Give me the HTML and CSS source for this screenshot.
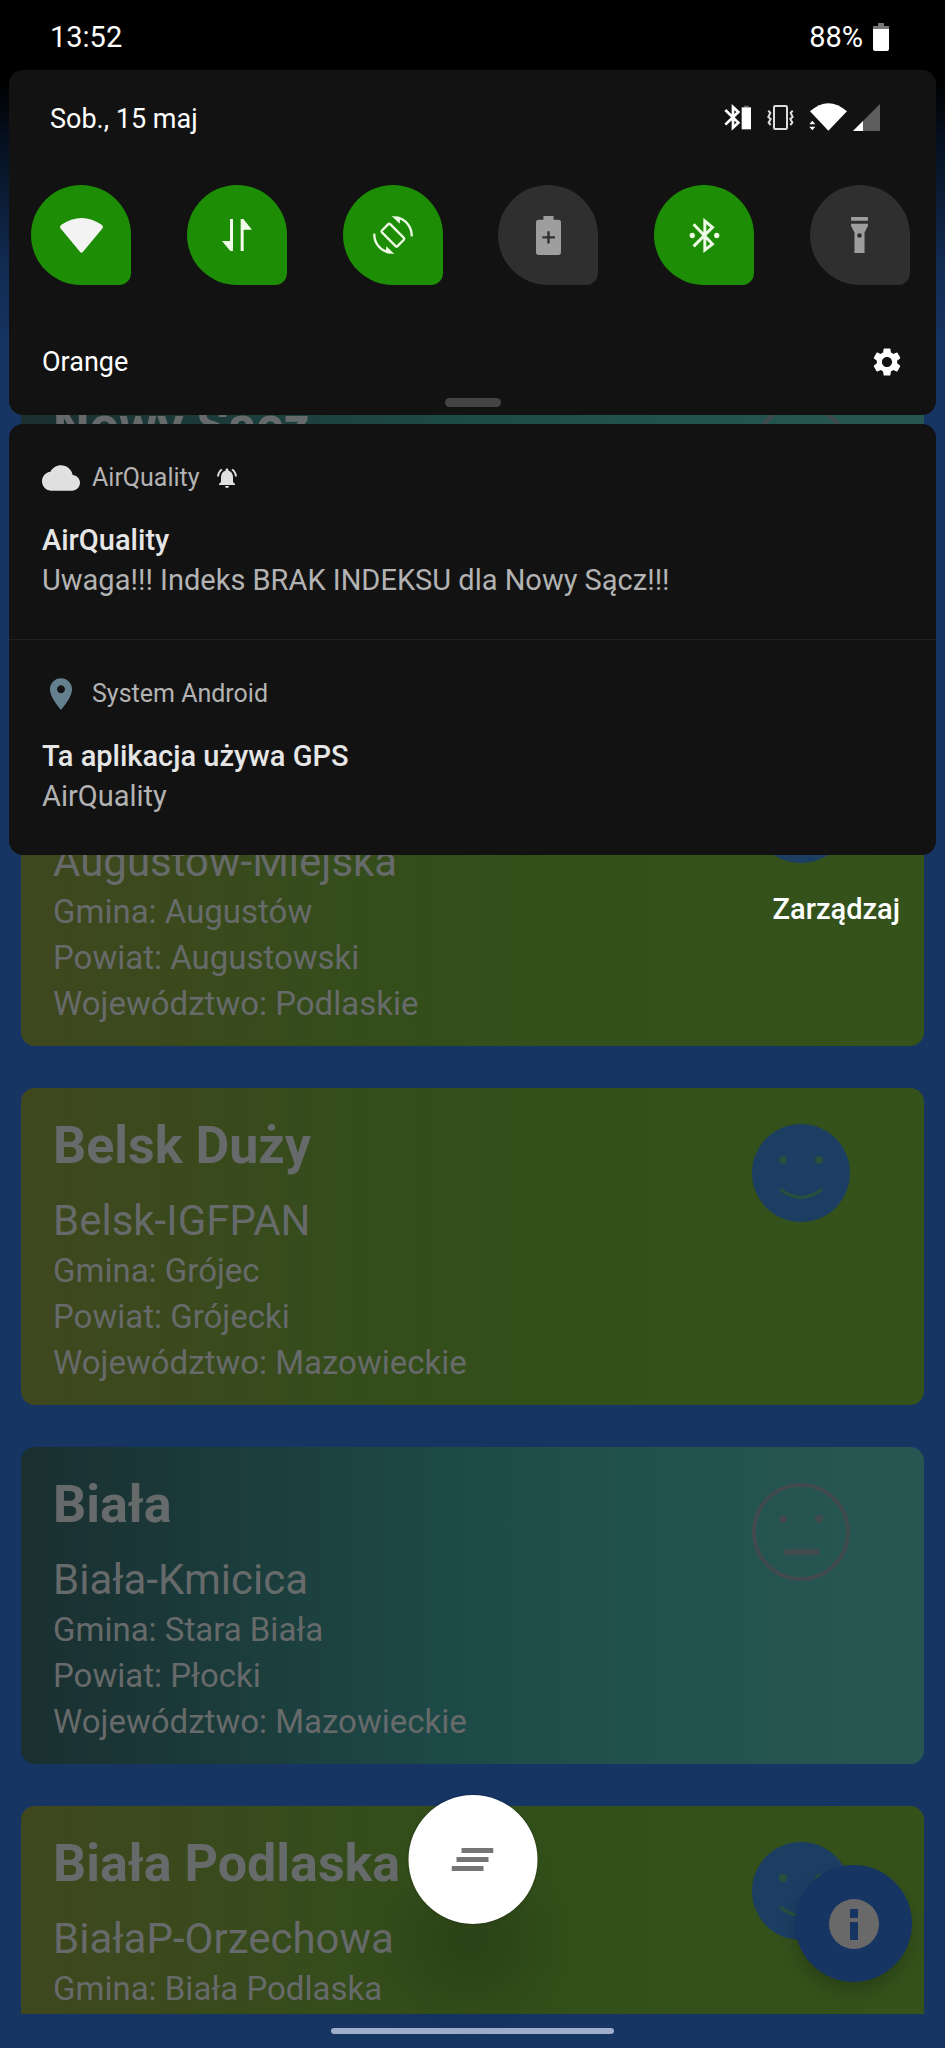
FILE: index.html
```html
<!DOCTYPE html>
<html lang="pl">
<head>
<meta charset="utf-8">
<meta name="viewport" content="width=device-width, initial-scale=1">
<title>AirQuality</title>
<link rel="stylesheet" href="styles.css">
</head>
<body>
<svg class="sprite" aria-hidden="true">
  <symbol id="happy" viewBox="-49 -49 98 98">
    <circle r="49" fill="#1c3e63"/>
    <g fill="#2a4f3c"><circle cx="-18" cy="-13" r="4"/><circle cx="18" cy="-13" r="4"/></g>
    <path d="M-21 16Q0 33 21 16" fill="none" stroke="#2a4f3c" stroke-width="3"/>
  </symbol>
  <symbol id="neutral" viewBox="-49 -49 98 98">
    <circle r="47" fill="none" stroke="#414b4d" stroke-width="4"/>
    <g fill="#414b4d"><circle cx="-18" cy="-13" r="4"/><circle cx="18" cy="-13" r="4"/></g>
    <path d="M-17 20H18" stroke="#414b4d" stroke-width="6"/>
  </symbol>
</svg>
<div class="screen">
  <div class="app">
    <main class="stations">
      <article class="card teal current">
        <div><h2>Nowy Sącz</h2></div>
        <svg class="face"><use href="#neutral"/></svg>
      </article>
      <article class="card green">
        <div class="details">
          <h3>Augustów-Miejska</h3>
          <p>Gmina: Augustów</p><p>Powiat: Augustowski</p><p>Województwo: Podlaskie</p>
        </div>
        <svg class="face"><use href="#happy"/></svg>
      </article>
      <article class="card green">
        <div>
          <h2>Belsk Duży</h2>
          <h3>Belsk-IGFPAN</h3>
          <p>Gmina: Grójec</p><p>Powiat: Grójecki</p><p>Województwo: Mazowieckie</p>
        </div>
        <svg class="face"><use href="#happy"/></svg>
      </article>
      <article class="card teal">
        <div>
          <h2>Biała</h2>
          <h3>Biała-Kmicica</h3>
          <p>Gmina: Stara Biała</p><p>Powiat: Płocki</p><p>Województwo: Mazowieckie</p>
        </div>
        <svg class="face"><use href="#neutral"/></svg>
      </article>
      <article class="card green">
        <div>
          <h2>Biała Podlaska</h2>
          <h3>BiałaP-Orzechowa</h3>
          <p>Gmina: Biała Podlaska</p>
        </div>
        <svg class="face"><use href="#happy"/></svg>
      </article>
    </main>
    <div class="navbar"><span class="home"></span></div>
    <button class="info" aria-label="Informacje">
      <svg width="50" height="50" viewBox="0 0 50 50"><circle cx="25" cy="25" r="25" fill="#696969"/><path d="M21 10h8v9h-8zM21 23h8v18h-8z" fill="#163563"/></svg>
    </button>
  </div>

  <div class="shade">
    <header class="status">
      <time>13:52</time>
      <span class="power">88%
        <svg width="16" height="28" viewBox="0 0 16 28"><path d="M5 0h6v3h5v3H0V3h5z" fill="#777"/><path d="M0 6h16v20a2 2 0 0 1-2 2H2a2 2 0 0 1-2-2z" fill="#fff"/></svg>
      </span>
    </header>

    <section class="panel quick">
      <div class="date">
        <span>Sob., 15 maj</span>
        <div class="icons">
          <svg class="i-bt" width="27" height="27" viewBox="0 0 81 81"><path d="M4 18 43 56 27 71V9L43 24 4 62" fill="none" stroke="#fff" stroke-width="8"/><path d="M60 5h14v5H60z" fill="#666"/><path d="M53 10h28v66H53z" fill="#fff"/></svg>
          <svg class="i-vib" width="27" height="27" viewBox="0 0 81 81"><g fill="none" stroke="#dcdcdc" stroke-width="6"><rect x="21" y="6" width="39" height="69" rx="4"/><path d="M4 20 10 27 4 39 11 45 5 56 11 63M77 20 71 27 77 39 70 45 76 56 70 63"/></g></svg>
          <svg class="i-wifi" width="38" height="28" viewBox="0 0 114 84" fill="#fff"><path d="M3 25Q58-24 114 25L58 83z"/><path d="M1 64 10 53 19 64zM1 71H19L10 82z"/></svg>
          <svg width="27" height="27" viewBox="0 0 81 81"><path d="M0 81H81V0z" fill="#5e5e5e"/><path d="M0 81H30V51z" fill="#fff"/></svg>
        </div>
      </div>
      <div class="tiles">
        <button class="tile on" aria-label="Wi-Fi"><svg width="43" height="35" viewBox="0 0 128 104" fill="#f3f3f3"><path d="M3 21Q64-21 125 21 130 26 126 31L68 101Q64 105 60 101L2 31Q-2 26 3 21z"/></svg></button>
        <button class="tile on" aria-label="Transmisja danych"><svg width="30" height="32" viewBox="0 0 90 96" fill="#f0fbe8"><path d="M24 0H33V96H25L0 66H24zM56 96V0H64L90 32H65V96z"/></svg></button>
        <button class="tile on" aria-label="Autoobracanie"><svg width="40" height="40" viewBox="-60 -60 120 120"><g fill="none" stroke="#effbe6" stroke-width="7"><rect x="-33" y="-17" width="66" height="35" rx="4" transform="rotate(45)"/><path d="M10-53A55 55 0 0 1 56 4M-10 53A55 55 0 0 1-56-4"/></g><path d="M-4-57 22-54 20-34zM4 57-22 54-20 34z" fill="#effbe6"/></svg></button>
        <button class="tile" aria-label="Oszczędzanie baterii"><svg width="25" height="39" viewBox="0 0 74 115"><path d="M22 0H52V11H66a8 8 0 0 1 8 8V107a8 8 0 0 1-8 8H8a8 8 0 0 1-8-8V19a8 8 0 0 1 8-8H22z" fill="#9e9e9e"/><path d="M19 63H56M37 45V81" stroke="#2f2f2f" stroke-width="7"/></svg></button>
        <button class="tile on" aria-label="Bluetooth"><svg width="31" height="35" viewBox="0 0 92 106"><path d="M13 19 70 79 47 97V9L70 28 13 86" fill="none" stroke="#effbe6" stroke-width="9"/><g fill="#effbe6"><circle cx="9" cy="53" r="8"/><circle cx="83" cy="53" r="8"/></g></svg></button>
        <button class="tile" aria-label="Latarka"><svg width="17" height="36" viewBox="0 0 50 107"><path d="M0 0H50V11H0zM0 20H50V27L40 46V107H10V46L0 27z" fill="#9e9e9e"/><circle cx="25" cy="55" r="7" fill="#2f2f2f"/></svg></button>
      </div>
      <div class="carrier">
        <span>Orange</span>
        <button class="plain" aria-label="Ustawienia"><svg width="34" height="34" viewBox="0 0 24 24" fill="#fff"><path d="M19.14 12.94c.04-.3.06-.61.06-.94 0-.32-.02-.64-.07-.94l2.03-1.58c.18-.14.23-.41.12-.61l-1.92-3.32c-.12-.22-.37-.29-.59-.22l-2.39.96c-.5-.38-1.03-.7-1.62-.94l-.36-2.54c-.04-.24-.24-.41-.48-.41h-3.84c-.24 0-.43.17-.47.41l-.36 2.54c-.59.24-1.13.57-1.62.94l-2.39-.96c-.22-.08-.47 0-.59.22L2.74 8.87c-.12.21-.08.47.12.61l2.03 1.58c-.05.3-.09.63-.09.94s.02.64.07.94l-2.03 1.58c-.18.14-.23.41-.12.61l1.92 3.32c.12.22.37.29.59.22l2.39-.96c.5.38 1.03.7 1.62.94l.36 2.54c.05.24.24.41.48.41h3.84c.24 0 .44-.17.47-.41l.36-2.54c.59-.24 1.13-.56 1.62-.94l2.39.96c.22.08.47 0 .59-.22l1.92-3.32c.12-.22.07-.47-.12-.61l-2.01-1.58zM12 15.6c-1.98 0-3.6-1.62-3.6-3.6s1.62-3.6 3.6-3.6 3.6 1.62 3.6 3.6-1.62 3.6-3.6 3.6z"/></svg></button>
      </div>
      <span class="grip"></span>
    </section>

    <section class="panel">
      <article class="note">
        <div class="source">
          <svg width="38" height="38" viewBox="0 0 24 24" fill="#e0e0e0"><path d="M19.35 10.04C18.67 6.59 15.64 4 12 4 9.11 4 6.6 5.64 5.35 8.04 2.34 8.36 0 10.91 0 14c0 3.31 2.69 6 6 6h13c2.76 0 5-2.24 5-5 0-2.64-2.05-4.78-4.65-4.96z"/></svg>
          <span>AirQuality</span>
          <svg class="bell" width="24" height="24" viewBox="0 0 24 24" fill="#e0e0e0"><path d="M7.58 4.08L6.15 2.65C3.75 4.48 2.17 7.3 2.03 10.5h2c.15-2.65 1.51-4.97 3.55-6.42zm12.39 6.42h2c-.15-3.2-1.73-6.02-4.12-7.85l-1.42 1.43c2.02 1.45 3.39 3.77 3.54 6.42zM18 11c0-3.07-1.64-5.64-4.5-6.32V4c0-.83-.67-1.5-1.5-1.5s-1.5.67-1.5 1.5v.68C7.63 5.36 6 7.92 6 11v5l-2 2v1h16v-1l-2-2v-5zm-6 11c1.1 0 2-.9 2-2h-4c0 1.1.9 2 2 2z"/></svg>
        </div>
        <h4>AirQuality</h4>
        <p>Uwaga!!! Indeks BRAK INDEKSU dla Nowy Sącz!!!</p>
      </article>
      <article class="note">
        <div class="source">
          <svg width="38" height="38" viewBox="0 0 24 24" fill="#64808e"><path d="M12 2C8.13 2 5 5.13 5 9c0 5.25 7 13 7 13s7-7.75 7-13c0-3.87-3.13-7-7-7zm0 9.5c-1.38 0-2.5-1.12-2.5-2.5s1.12-2.5 2.5-2.5 2.5 1.12 2.5 2.5-1.12 2.5-2.5 2.5z"/></svg>
          <span>System Android</span>
        </div>
        <h4>Ta aplikacja używa GPS</h4>
        <p>AirQuality</p>
      </article>
    </section>
    <button class="plain manage">Zarządzaj</button>
    <button class="clear" aria-label="Usuń wszystkie powiadomienia">
      <svg width="42" height="24" viewBox="0 0 42 24" fill="#757575"><path d="M10 0h32v5H10zM5 9h32v5H5zM0 18h32v5H0z"/></svg>
    </button>
  </div>
</div>
</body>
</html>
```
FILE: styles.css
```css
* { box-sizing: border-box; }
body { margin: 0; background: #163563; font-family: Roboto, "Noto Sans", sans-serif; }
h2, h3, h4, p { margin: 0; }
button { border: 0; padding: 0; font: inherit; color: inherit; cursor: pointer; }
svg { display: block; flex: none; }
.sprite { position: absolute; width: 0; height: 0; }

.screen { display: grid; height: 100vh; overflow: hidden; }
.app, .shade { grid-area: 1 / 1; min-width: 0; min-height: 0; position: relative; display: flex; flex-direction: column; }

.app { background: linear-gradient(#000 80px, #06101f 140px, #112b52 270px, #163563 350px); }
.stations { flex: 1; min-height: 0; overflow: hidden; padding: 368px 21px 0; }
.card {
  display: flex; justify-content: space-between; align-items: flex-start;
  min-height: 317px; margin-bottom: 42px; padding: 28px 32px 19px;
  border-radius: 14px; color: #676a6a;
}
.card.current { margin-bottom: 44px; }
.details { align-self: flex-end; }
.green { background: linear-gradient(90deg, #3f471e, #344d1b 40%, #32501a 60%, #35521b); }
.teal { background: linear-gradient(90deg, #1a2f30, #1d4b48 50%, #22524e 70%, #285753); }
.card h2 { font-size: 52px; line-height: 60px; font-weight: 700; margin-bottom: 18px; }
.card h3 { font-size: 42px; line-height: 54px; font-weight: 400; }
.card p { font-size: 33px; line-height: 46px; }
.face { width: 98px; height: 98px; margin: 8px 42px 0 0; }

.navbar { height: 34px; display: flex; justify-content: center; align-items: center; }
.home { width: 30%; height: 6px; border-radius: 3px; background: #9fafcb; }
.info {
  position: absolute; right: 33px; bottom: 66px; width: 117px; height: 117px;
  display: flex; align-items: center; justify-content: center;
  border-radius: 50%; background: #163563; box-shadow: 0 10px 18px rgba(0, 0, 0, .2);
}

.shade { padding: 0 9px; color: #fff; }
.status { height: 70px; display: flex; justify-content: space-between; align-items: center; padding: 3px 47px 0 41px; font-size: 29px; }
.power { display: flex; align-items: center; gap: 10px; }
.panel { background: #121212; border-radius: 14px; }
.quick { margin-bottom: 9px; padding-bottom: 8px; font-size: 27px; }
.date { height: 115px; display: flex; justify-content: space-between; align-items: flex-start; padding: 33px 56px 0 41px; }
.icons { display: flex; align-items: center; gap: 6px; }
.i-bt { margin-right: 10px; }
.i-vib { margin-right: 9px; }
.tiles { display: flex; justify-content: space-between; padding: 0 26px 0 22px; }
.tile {
  width: 100px; height: 100px; display: flex; align-items: center; justify-content: center;
  border-radius: 50px 50px 12px 50px; background: #2f2f2f;
}
.tile.on { background: #1c8d04; }
.carrier { display: flex; justify-content: space-between; align-items: center; padding: 60px 32px 19px 33px; }
.plain { background: none; }
.grip { display: block; width: 56px; height: 9px; margin: 0 auto; border-radius: 5px; background: #444; }

.note { padding: 38px 33px 39px; font-size: 29px; line-height: 40px; color: #b3b3b3; }
.note + .note { border-top: 1px solid #202020; }
.source { display: flex; align-items: center; gap: 12px; height: 32px; margin-bottom: 26px; font-size: 25px; }
.bell { margin-left: 3px; }
.note h4 { font-size: 29px; font-weight: 500; color: #e6e6e6; }
.manage { align-self: flex-end; margin: 34px 36px 0 0; font-size: 29px; line-height: 40px; font-weight: 500; }
.clear {
  position: absolute; left: 50%; bottom: 124px; width: 129px; height: 129px; transform: translateX(-50%);
  display: flex; align-items: center; justify-content: center;
  border-radius: 50%; background: #fff; box-shadow: 0 80px 70px -10px rgba(0, 0, 0, .2), 0 0 3px rgba(0, 0, 0, .3);
}
```
